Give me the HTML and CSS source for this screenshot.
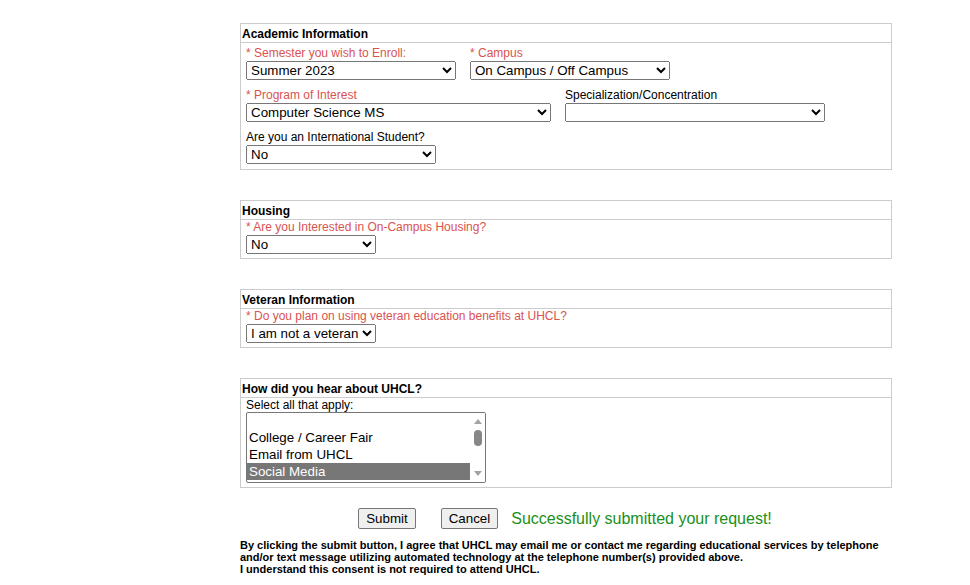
FILE: index.html
```html
<!DOCTYPE html>
<html lang="en">
<head>
<meta charset="utf-8">
<title>Request Information</title>
<link rel="stylesheet" href="styles.css">
</head>
<body>
<div class="page">
  <section class="box">
    <div class="box-head">Academic Information</div>
    <div class="box-body academic">
      <div class="row">
        <div class="field">
          <label class="req">* Semester you wish to Enroll:</label>
          <select class="w210"><option>Summer 2023</option><option>Fall 2023</option></select>
        </div>
        <div class="field">
          <label class="req">* Campus</label>
          <select class="w200"><option>On Campus / Off Campus</option></select>
        </div>
      </div>
      <div class="row">
        <div class="field">
          <label class="req">* Program of Interest</label>
          <select class="w305"><option>Computer Science MS</option></select>
        </div>
        <div class="field">
          <label>Specialization/Concentration</label>
          <select class="w260"><option></option></select>
        </div>
      </div>
      <div class="row">
        <div class="field">
          <label>Are you an International Student?</label>
          <select class="w190"><option>No</option><option>Yes</option></select>
        </div>
      </div>
    </div>
  </section>

  <section class="box">
    <div class="box-head">Housing</div>
    <div class="box-body">
      <div class="field">
        <label class="req">* Are you Interested in On-Campus Housing?</label>
        <select class="w130"><option>No</option><option>Yes</option></select>
      </div>
    </div>
  </section>

  <section class="box">
    <div class="box-head">Veteran Information</div>
    <div class="box-body">
      <div class="field">
        <label class="req">* Do you plan on using veteran education benefits at UHCL?</label>
        <select class="w130"><option>I am not a veteran</option></select>
      </div>
    </div>
  </section>

  <section class="box">
    <div class="box-head">How did you hear about UHCL?</div>
    <div class="box-body">
      <div class="field">
        <label>Select all that apply:</label>
        <div class="listbox">
          <div class="list-items">
            <div class="opt">College / Career Fair</div>
            <div class="opt">Email from UHCL</div>
            <div class="opt selected">Social Media</div>
          </div>
          <div class="scrollbar">
            <span class="arrow up"></span>
            <span class="thumb"></span>
            <span class="arrow down"></span>
          </div>
        </div>
      </div>
    </div>
  </section>

  <div class="actions">
    <button type="button" class="btn">Submit</button>
    <button type="button" class="btn btn-cancel">Cancel</button>
    <span class="success">Successfully submitted your request!</span>
  </div>

  <p class="consent">By clicking the submit button, I agree that UHCL may email me or contact me regarding educational services by telephone<br>and/or text message utilizing automated technology at the telephone number(s) provided above.<br>I understand this consent is not required to attend UHCL.</p>
</div>
</body>
</html>
```

FILE: styles.css
```css
html, body {
  margin: 0;
  padding: 0;
  background: #ffffff;
}

body {
  font-family: "Liberation Sans", Arial, sans-serif;
  color: #000;
}

.page {
  width: 652px;
  margin-left: 240px;
  padding-top: 23px;
}

.box {
  border: 1px solid #cccccc;
  margin-bottom: 30px;
}

.box-head {
  height: 18px;
  line-height: 20px;
  font-size: 12px;
  font-weight: bold;
  padding-left: 1px;
  border-bottom: 1px solid #cccccc;
  overflow: hidden;
}

.box-body {
  padding: 0 5px 4px 5px;
}

.box-body.academic {
  padding-top: 3px;
  padding-bottom: 5px;
  display: flex;
  flex-direction: column;
  gap: 8px;
}

.row {
  display: flex;
  gap: 14px;
}

.field {
  display: flex;
  flex-direction: column;
  align-items: flex-start;
}

.field label {
  font-size: 12px;
  line-height: 14px;
  height: 14px;
  white-space: nowrap;
}

.field label.req {
  color: #d9534f;
}

select {
  font-family: "Liberation Sans", Arial, sans-serif;
  font-size: 13.333px;
  height: 19px;
  margin-top: 1px;
  box-sizing: border-box;
  color: #000;
}

.w130 { width: 130px; }
.w190 { width: 190px; }
.w200 { width: 200px; }
.w210 { width: 210px; }
.w260 { width: 260px; }
.w305 { width: 305px; }

.listbox {
  width: 240px;
  height: 71px;
  box-sizing: border-box;
  border: 1px solid #767676;
  border-radius: 2px;
  display: flex;
  overflow: hidden;
}

.list-items {
  flex: 1;
  padding-top: 16px;
}

.opt {
  height: 17px;
  line-height: 17px;
  font-size: 13.333px;
  padding-left: 2px;
  white-space: nowrap;
}

.opt.selected {
  background: #777777;
  color: #ffffff;
}

.scrollbar {
  width: 15px;
  background: #ffffff;
  display: flex;
  flex-direction: column;
  align-items: center;
  justify-content: space-between;
  padding: 6px 0 6px 0;
  box-sizing: border-box;
}

.arrow {
  width: 0;
  height: 0;
  border-left: 4px solid transparent;
  border-right: 4px solid transparent;
}

.arrow.up {
  border-bottom: 5px solid #a3a3a3;
}

.arrow.down {
  border-top: 5px solid #a3a3a3;
}

.thumb {
  width: 8px;
  height: 16px;
  border-radius: 4px;
  background: #878787;
  margin-top: 3px;
  margin-bottom: auto;
}

.scrollbar .arrow.up {
  margin-bottom: 3px;
}

.actions {
  display: flex;
  align-items: center;
  justify-content: center;
  margin-top: -10px;
  height: 21px;
  padding-right: 2px;
}

.btn {
  font-family: "Liberation Sans", Arial, sans-serif;
  font-size: 13.333px;
  height: 21px;
  padding: 1px 7px;
  color: #000;
  background: #efefef;
  border: 1px solid #767676;
  border-radius: 2px;
}

.btn-cancel {
  margin-left: 25px;
}

.success {
  margin-left: 13px;
  font-size: 16px;
  color: #1a8f1a;
}

.consent {
  margin: 10px 0 0 0;
  font-size: 11px;
  line-height: 12px;
  font-weight: bold;
  white-space: nowrap;
}
```
